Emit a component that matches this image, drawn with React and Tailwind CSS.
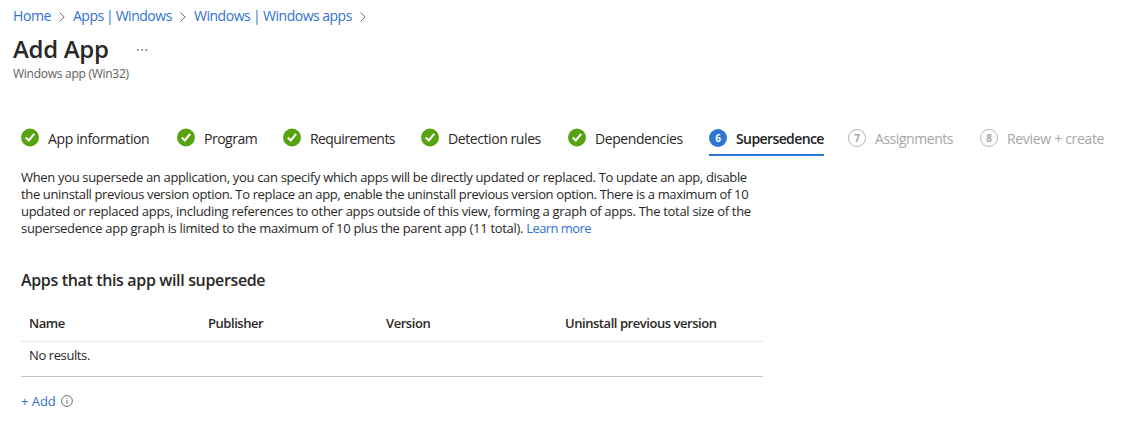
import React from "react";

function Chevron() {
  return (
    <svg className="mt-px h-3 w-[6px] shrink-0" viewBox="0 0 6 12" fill="none" stroke="#6f6f6f" strokeWidth="1">
      <path d="M0.5 1.5 L5.2 6 L0.5 10.5" />
    </svg>
  );
}

function CheckBadge() {
  return (
    <svg className="h-[19px] w-[18px] shrink-0" viewBox="0 0 18 19">
      <circle cx="9" cy="9.5" r="9" fill="#57a30f" />
      <path d="M4.8 9.4 L7.8 12.4 L13.2 5.9" fill="none" stroke="#fff" strokeWidth="2.1" />
    </svg>
  );
}

function NumberBadge({ n, active }) {
  const tone = active
    ? "bg-[#2f75d3] text-white"
    : "border border-[#b5b5b5] text-[#a6a6a6]";
  return (
    <span className={"flex h-[18px] w-[18px] shrink-0 items-center justify-center rounded-full text-[10px] leading-none font-bold " + tone}>
      {n}
    </span>
  );
}

const steps = [
  { label: "App information", done: true, box: "w-[156px]", text: "tracking-[-0.37px]" },
  { label: "Program", done: true, box: "w-[106px]", text: "tracking-[-0.5px]" },
  { label: "Requirements", done: true, box: "w-[138px]", text: "tracking-[-0.58px]" },
  { label: "Detection rules", done: true, box: "w-[147px]", text: "tracking-[-0.42px]" },
  { label: "Dependencies", done: true, box: "w-[141px]", text: "tracking-[-0.43px]" },
  { label: "Supersedence", n: 6, active: true, box: "w-[139px]", text: "tracking-[-0.6px]" },
  { label: "Assignments", n: 7, box: "w-[132px]", text: "tracking-[-0.45px]" },
  { label: "Review + create", n: 8, box: "w-[126px]", text: "tracking-[-0.32px]" },
];

function Step({ label, done, n, active, box, text }) {
  const tone = active ? "font-semibold text-[#222]" : done ? "text-[#292827]" : "text-[#a6a6a6]";
  return (
    <div className={"flex shrink-0 " + box}>
      <div className={"flex h-[32px] items-start border-b-2 " + (active ? "w-[115px] border-[#2f75d3]" : "border-transparent")}>
        <span className="mt-1 flex h-[19px] items-center">{done ? <CheckBadge /> : <NumberBadge n={n} active={active} />}</span>
        <span className={"mt-[5px] ml-[9px] text-[14px] leading-[20px] whitespace-nowrap " + tone + " " + text}>{label}</span>
      </div>
    </div>
  );
}

export default function App() {
  return (
    <div className="h-[425px] w-[1121px] overflow-hidden bg-white font-['Open_Sans','Noto_Sans',sans-serif] text-[13px] text-[#292827]">
      <nav className="flex items-center pt-[6px] pl-[13px] text-[14px] leading-[20px] whitespace-nowrap text-[#3272d0]">
        <a className="w-[46px] tracking-[-0.4px]">Home</a>
        <Chevron />
        <a className="ml-2 w-[107px] tracking-[-0.48px] [word-spacing:-0.8px]">Apps | Windows</a>
        <Chevron />
        <a className="ml-2 w-[166px] tracking-[-0.48px] [word-spacing:-0.3px]">Windows | Windows apps</a>
        <Chevron />
      </nav>
      <header className="pt-[7px] pl-[13px]">
        <div className="flex h-[33px] items-start">
          <h1 className="w-[123px] text-[24px] leading-[32px] font-semibold tracking-[-0.3px] whitespace-nowrap text-[#292827]">Add App</h1>
          <svg className="mt-[16px] h-[2px] w-[12px]" viewBox="0 0 12 2" fill="#555">
            <rect x="1" y="0.2" width="1.5" height="1.5" />
            <rect x="5.3" y="0.2" width="1.5" height="1.5" />
            <rect x="9.6" y="0.2" width="1.5" height="1.5" />
          </svg>
        </div>
        <p className="text-[12px] leading-[16px] tracking-[-0.27px] text-[#605e5c]">Windows app (Win32)</p>
      </header>
      <main className="pl-[21px]">
        <div className="mt-[42px] flex">
          {steps.map((s) => (
            <Step key={s.label} {...s} />
          ))}
        </div>
        <p className="mt-[13px] leading-[17px] whitespace-nowrap">
          <span className="block tracking-[-0.33px]">When you supersede an application, you can specify which apps will be directly updated or replaced. To update an app, disable</span>
          <span className="block tracking-[-0.355px]">the uninstall previous version option. To replace an app, enable the uninstall previous version option. There is a maximum of 10</span>
          <span className="block tracking-[-0.3px]">updated or replaced apps, including references to other apps outside of this view, forming a graph of apps. The total size of the</span>
          <span className="block tracking-[-0.31px]">
            supersedence app graph is limited to the maximum of 10 plus the parent app (11 total). <a className="tracking-[-0.55px] text-[#3272d0]">Learn more</a>
          </span>
        </p>
        <h2 className="mt-[33px] text-[16px] leading-[20px] font-semibold tracking-[-0.35px]">Apps that this app will supersede</h2>
        <div className="mt-[15px] w-[742px]">
          <div className="flex h-[37px] items-start border-b border-[#e8e8e8] pt-[9px] pl-2 leading-[18px] font-semibold tracking-[-0.45px]">
            <span className="w-[179px]">Name</span>
            <span className="w-[178px]">Publisher</span>
            <span className="w-[179px]">Version</span>
            <span>Uninstall previous version</span>
          </div>
          <div className="h-[35px] border-b border-[#c4c4c4] pt-[4px] pl-2 leading-[18px] tracking-[-0.4px]">No results.</div>
        </div>
        <div className="mt-[15px] flex h-[18px] items-center leading-[18px] text-[#3272d0]">
          <a className="w-[40px] tracking-[-0.05px]">+ Add</a>
          <svg className="h-[12px] w-[12px]" viewBox="0 0 12 12" fill="none" stroke="#6c6c6c">
            <circle cx="6" cy="6" r="5.4" />
            <path d="M6 5 V9 M6 3 V4" />
          </svg>
        </div>
      </main>
    </div>
  );
}
